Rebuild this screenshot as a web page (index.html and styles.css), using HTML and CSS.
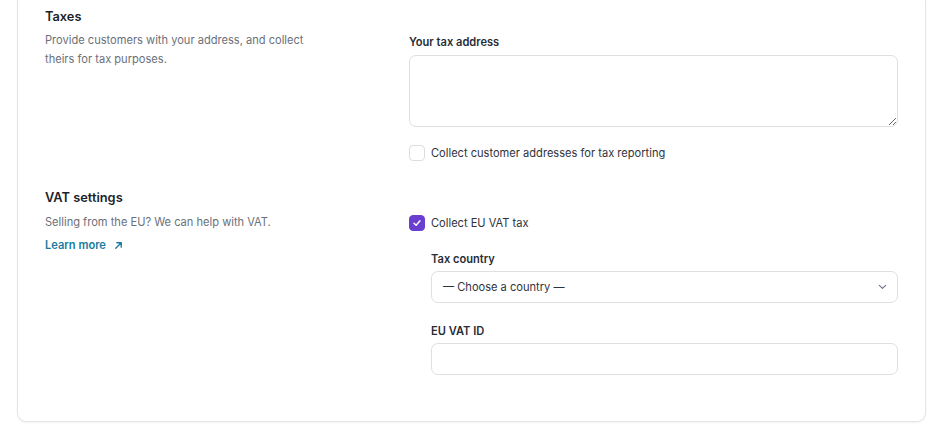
FILE: index.html
```html
<!DOCTYPE html>
<html lang="en">
<head>
<meta charset="utf-8">
<title>Tax settings</title>
<link rel="stylesheet" href="styles.css">
</head>
<body>
<div class="page">
  <section class="card">
    <div class="row">
      <div class="intro">
        <h2 class="title">Taxes</h2>
        <p class="desc">Provide customers with your address, and collect theirs for tax purposes.</p>
      </div>
      <div class="fields">
        <label class="label">Your tax address</label>
        <textarea class="textarea"></textarea>
        <div class="check-row check-row-gap">
          <span class="box"></span>
          <span class="check-text">Collect customer addresses for tax reporting</span>
        </div>
      </div>
    </div>
    <div class="row row-vat">
      <div class="intro">
        <h2 class="title">VAT settings</h2>
        <p class="desc">Selling from the EU? We can help with VAT.</p>
        <a class="link" href="#">Learn more
          <svg class="arrow" viewBox="0 0 12 12" width="11" height="11"><path d="M3 9 L9 3 M4.2 3 H9 V7.8" fill="none" stroke="currentColor" stroke-width="1.5" stroke-linecap="round" stroke-linejoin="round"/></svg>
        </a>
      </div>
      <div class="fields">
        <div class="check-row">
          <span class="box checked">
            <svg viewBox="0 0 16 16" width="16" height="16"><path d="M4.6 8.3 L7 10.6 L11.4 5.4" fill="none" stroke="#fff" stroke-width="1.6" stroke-linecap="round" stroke-linejoin="round"/></svg>
          </span>
          <span class="check-text">Collect EU VAT tax</span>
        </div>
        <div class="nested">
          <label class="label">Tax country</label>
          <div class="select">
            <span>— Choose a country —</span>
            <svg class="chev" viewBox="0 0 10 6" width="9" height="6"><path d="M1.5 1.2 L5 4.6 L8.5 1.2" fill="none" stroke="#6b7280" stroke-width="1.2" stroke-linecap="round" stroke-linejoin="round"/></svg>
          </div>
          <label class="label label-gap">EU VAT ID</label>
          <input class="input" type="text">
        </div>
      </div>
    </div>
  </section>
</div>
</body>
</html>
```

FILE: styles.css
```css
* { box-sizing: border-box; }
html, body { margin: 0; padding: 0; background: #ffffff; }
body {
  font-family: Inter, "Noto Sans", sans-serif;
  color: #1f2430;
  -webkit-font-smoothing: antialiased;
}
.page { padding: 0 19px 14px 17px; }
.card {
  background: #fff;
  border: 1px solid #e4e4e7;
  border-top: none;
  border-radius: 0 0 9px 9px;
  box-shadow: 0 1px 2px rgba(0,0,0,0.05);
  padding: 7px 27px 46px 27px;
}
.row {
  display: grid;
  grid-template-columns: 364px 1fr;
}
.row-vat { margin-top: 26px; }
.title {
  margin: 0;
  font-size: 12.8px;
  line-height: 20px;
  font-weight: 600;
  color: #1a1f2b;
}
.desc {
  margin: 4px 0 0;
  font-size: 11.1px;
  line-height: 19px;
  color: #6b7079;
  max-width: 270px;
}
.row-vat .desc { margin-top: 5px; }
.link {
  display: inline-flex;
  align-items: center;
  gap: 7px;
  margin-top: 4px;
  font-size: 11.1px;
  line-height: 18px;
  font-weight: 600;
  color: #1a7a9e;
  text-decoration: none;
}
.arrow { margin-top: 1px; }
.fields {
  padding-top: 26px;
  display: flex;
  flex-direction: column;
}
.label {
  display: block;
  font-size: 11.1px;
  line-height: 18px;
  font-weight: 600;
  color: #272c36;
}
.label-gap { margin-top: 19px; }
.textarea {
  display: block;
  margin-top: 4px;
  width: 100%;
  height: 72px;
  border: 1px solid #dedfe2;
  border-radius: 7px;
  resize: vertical;
  font: inherit;
  background: #fff;
}
.check-row {
  display: flex;
  align-items: center;
  gap: 6px;
  height: 18px;
}
.check-row-gap { margin-top: 17px; }
.box {
  width: 16px;
  height: 16px;
  border: 1px solid #dcdde0;
  border-radius: 4px;
  background: #fff;
  flex: none;
  display: flex;
  align-items: center;
  justify-content: center;
}
.box.checked {
  background: #6a3fcf;
  border-color: #6a3fcf;
}
.box.checked svg { display: block; }
.check-text {
  font-size: 11.1px;
  line-height: 18px;
  color: #2f333b;
}
.nested {
  padding-left: 22px;
  margin-top: 18px;
}
.select {
  margin-top: 3px;
  height: 32px;
  border: 1px solid #dedfe2;
  border-radius: 7px;
  display: flex;
  align-items: center;
  justify-content: space-between;
  padding: 0 10px 0 11px;
  font-size: 11.1px;
  color: #2f333b;
}
.input {
  display: block;
  margin-top: 3px;
  width: 100%;
  height: 32px;
  border: 1px solid #dedfe2;
  border-radius: 7px;
  font: inherit;
  background: #fff;
}
```
